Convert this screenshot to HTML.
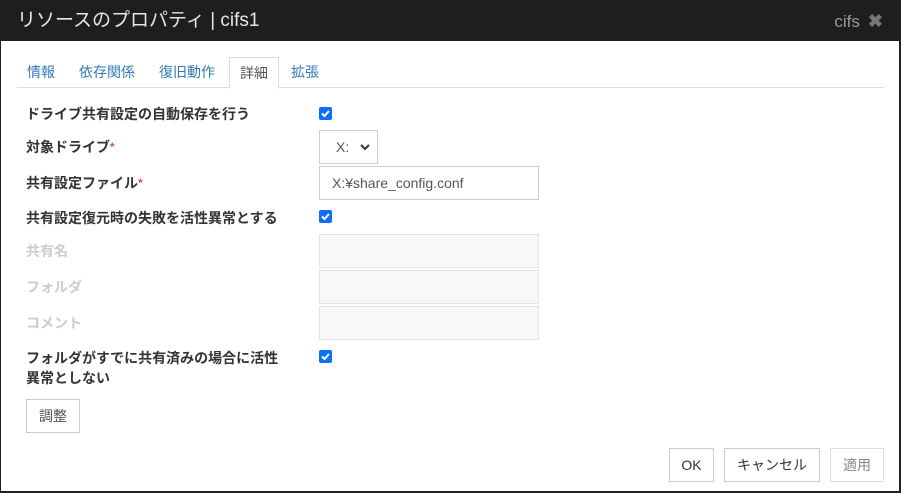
<!DOCTYPE html>
<html><head><meta charset="utf-8"><style>
*{box-sizing:border-box;margin:0;padding:0}
body{width:901px;height:493px;background:#222;font-family:"Liberation Sans","Noto Sans CJK JP",sans-serif;position:relative;overflow:hidden}
.win{position:absolute;left:1px;top:1px;width:898px;height:490px;background:#fff}
.title{position:absolute;left:0;top:0;width:898px;height:40px;background:#1e1e1e;color:#e6e6e6;font-size:19px;line-height:40px;padding-left:16px}
.tr{position:absolute;right:16px;top:0;color:#999;font-size:17px}
.tr b{font-size:18px;margin-left:8px;color:#777}
.tabs{position:absolute;left:16px;top:56px;width:867px;height:31px;border-bottom:1px solid #ddd}
.tab{position:absolute;top:0;height:31px;line-height:30px;font-size:14px;color:#337ab7;padding:0 10px}
.tab.act{border:1px solid #ddd;border-bottom:1px solid #fff;color:#555;background:#fff;height:32px}
.lbl{position:absolute;left:25px;font-size:14px;color:#333;font-weight:bold;line-height:20px}
.lbl.dis{color:#ccc}
.star{color:#d9534f;font-size:12px;vertical-align:top}
.cb{position:absolute;left:318px;width:13px;height:13px;background:#0d6efd;border-radius:2px}
.cb svg{position:absolute;left:1px;top:1px}
.inp{position:absolute;left:318px;width:220px;height:34px;border:1px solid #ccc;font-size:14px;color:#555;padding-left:12px;line-height:32px}
.inp.dis{background:#f8f8f8;border-color:#e4e4e4}
.btn{position:absolute;height:34px;border:1px solid #ccc;background:#fff;font-size:14px;color:#333;text-align:center;line-height:32px}
</style></head><body><div class="win">
<div class="title">リソースのプロパティ | cifs1<div class="tr">cifs<b>✖</b></div></div>
<div class="tabs">
<div class="tab" style="left:0">情報</div>
<div class="tab" style="left:52px">依存関係</div>
<div class="tab" style="left:132px">復旧動作</div>
<div class="tab act" style="left:212px">詳細</div>
<div class="tab" style="left:264px">拡張</div>
</div>
<div class="lbl" style="top:103px">ドライブ共有設定の自動保存を行う</div>
<div class="cb" style="top:106px"><svg width="11" height="11"><path d="M2 5.5l2.5 2.5 4.5-5" stroke="#fff" stroke-width="2" fill="none"/></svg></div>
<div class="lbl" style="top:136px">対象ドライブ<span class="star">*</span></div>
<div class="inp" style="top:129px;width:59px;padding-left:16px">X:<svg style="position:absolute;left:40px;top:13px" width="10" height="7"><path d="M1 1l4 4 4-4" stroke="#333" stroke-width="2" fill="none"/></svg></div>
<div class="lbl" style="top:172px">共有設定ファイル<span class="star">*</span></div>
<div class="inp" style="top:165px">X:¥share_config.conf</div>
<div class="lbl" style="top:207px">共有設定復元時の失敗を活性異常とする</div>
<div class="cb" style="top:209px"><svg width="11" height="11"><path d="M2 5.5l2.5 2.5 4.5-5" stroke="#fff" stroke-width="2" fill="none"/></svg></div>
<div class="lbl dis" style="top:240px">共有名</div>
<div class="inp dis" style="top:233px"></div>
<div class="lbl dis" style="top:276px">フォルダ</div>
<div class="inp dis" style="top:269px"></div>
<div class="lbl dis" style="top:312px">コメント</div>
<div class="inp dis" style="top:305px"></div>
<div class="lbl" style="top:347px">フォルダがすでに共有済みの場合に活性<br>異常としない</div>
<div class="cb" style="top:349px"><svg width="11" height="11"><path d="M2 5.5l2.5 2.5 4.5-5" stroke="#fff" stroke-width="2" fill="none"/></svg></div>
<div class="btn" style="left:25px;top:398px;width:54px;color:#555">調整</div>
<div class="btn" style="left:668px;top:447px;width:45px">OK</div>
<div class="btn" style="left:723px;top:447px;width:96px">キャンセル</div>
<div class="btn" style="left:829px;top:447px;width:54px;color:#888;border-color:#ddd">適用</div>
</div></body></html>
